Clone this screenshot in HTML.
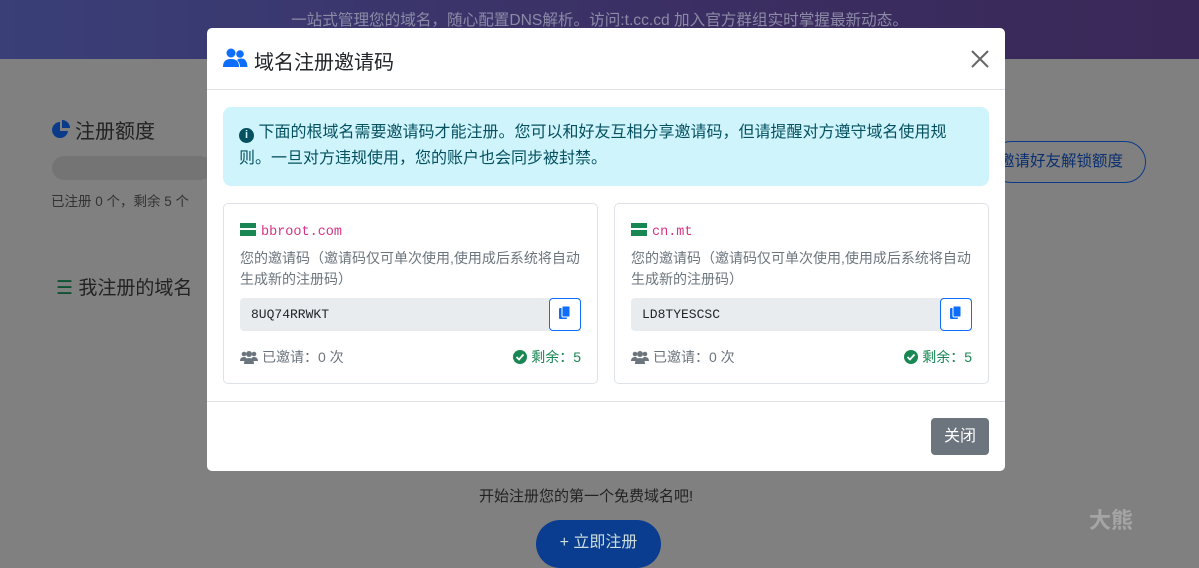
<!DOCTYPE html>
<html><head><meta charset="utf-8"><style>
*{box-sizing:border-box;margin:0;padding:0}
body{width:1199px;height:560px;overflow:hidden;position:relative;background:#808080;font-family:"Liberation Sans","Noto Sans CJK SC",sans-serif;color:#212529}
.top{position:absolute;left:0;top:0;width:1199px;height:59px;background:linear-gradient(90deg,#3a3f78,#3b2e62 60%,#3a2858)}
.top p{position:absolute;top:8px;left:0;width:1199px;text-align:center;color:#8c8aa6;font-size:15.6px}
.bg{position:absolute;font-size:15px;color:#222}
.modal{position:absolute;left:207px;top:28px;width:798px;height:443px;background:#fff;border-radius:5px}
.hd{height:62px;border-bottom:1px solid #dee2e6;position:relative}
.hd h5{position:absolute;left:47px;top:18px;font-size:20px;font-weight:normal}
.close{position:absolute;right:16px;top:22px}
.alert{position:absolute;left:16px;top:79px;width:766px;height:79px;background:#cff4fc;border-radius:8px;color:#055160;font-size:16px;line-height:26px;padding:13px 16px}
.card{position:absolute;top:175px;width:375px;height:181px;border:1px solid #dee2e6;border-radius:5px;padding:0 16px}
.dom{position:absolute;left:16px;top:19px;font-family:"Liberation Mono",monospace;color:#d63384;font-size:13.5px}
.dom i{display:inline-block;width:16px;height:13px;vertical-align:-1px;margin-right:5px;background:linear-gradient(#198754 0 5px,#fff 5px 7px,#198754 7px)}
.desc{position:absolute;left:16px;top:44px;width:345px;font-size:14px;color:#6c757d;line-height:21px}
.inp{position:absolute;left:16px;top:94px;width:341px;height:33px;background:#e9ecef;border-radius:4px 0 0 4px;font-family:"Liberation Mono",monospace;font-size:13px;padding:9px 11px;color:#212529}
.cp{position:absolute;left:325px;top:94px;width:32px;height:33px;border:1px solid #0d6efd;border-radius:4px;background:#fff}
.inv{position:absolute;left:16px;top:143px;font-size:14px;color:#6c757d}
.rem{position:absolute;right:16px;top:143px;font-size:14px;color:#198754}
.inv svg,.rem svg{vertical-align:-2px;margin-right:4px}
.ft{position:absolute;left:0;top:373px;width:798px;border-top:1px solid #dee2e6}
.btn{position:absolute;left:724px;top:390px;width:58px;height:37px;background:#6c757d;color:#fff;border-radius:4px;font-size:16px;text-align:center;line-height:37px}
</style></head><body>
<div class="top"><p>一站式管理您的域名，随心配置DNS解析。访问:t.cc.cd 加入官方群组实时掌握最新动态。</p></div>
<div class="bg" style="left:51px;top:115px;font-size:20px"><svg width="20" height="20" viewBox="0 0 20 20" style="vertical-align:-2px;margin-right:4px"><path d="M9 2A8 8 0 1 0 17 11H9z" fill="#0a3a8a"/><path d="M11 0A8 8 0 0 1 19 8H11z" fill="#0a3a8a"/></svg>注册额度</div>
<div style="position:absolute;left:52px;top:156px;width:160px;height:24px;background:#747474;border-radius:12px"></div>
<div class="bg" style="left:51px;top:190px;font-size:13.5px;color:#333">已注册 0 个，剩余 5 个</div>
<div class="bg" style="left:56px;top:273px;font-size:19px"><span style="color:#0f5132">☰</span> 我注册的域名</div>
<div style="position:absolute;left:990px;top:141px;width:156px;height:42px;border:1px solid #0a3a8a;border-radius:21px;color:#0a2f70;font-size:15.5px;line-height:40px;padding-left:8px">邀请好友解锁额度</div>
<div class="bg" style="left:479px;top:485px;font-size:15px">开始注册您的第一个免费域名吧!</div>
<div style="position:absolute;left:536px;top:520px;width:125px;height:48px;border-radius:24px;background:#0a3d8f;color:#cdd;font-size:16px;text-align:center;line-height:46px">+ 立即注册</div>
<div style="position:absolute;left:1089px;top:503px;color:#a5a5a5;font-size:22px;font-weight:bold">大熊</div>
<div class="modal">
<div class="hd">
<svg style="position:absolute;left:16px;top:20px" width="25" height="20" viewBox="0 0 25 20"><circle cx="8" cy="5" r="4.5" fill="#0d6efd"/><circle cx="17" cy="6" r="3.8" fill="#0d6efd"/><path d="M0 19c0-6 3-8 8-8s8 2 8 8z" fill="#0d6efd"/><path d="M14 12c1-1 2-1.5 4-1.5 4 0 6 2 6.5 8.5H17c0-3-1-5-3-7z" fill="#0d6efd"/></svg>
<h5>域名注册邀请码</h5>
<svg class="close" width="18" height="18" viewBox="0 0 18 18"><path d="M1 1L17 17M17 1L1 17" stroke="#666" stroke-width="2"/></svg>
</div>
<div class="alert"><span style="display:inline-block;width:15px;height:15px;border-radius:50%;background:#055160;color:#cff4fc;font-size:11px;line-height:15px;text-align:center;font-weight:bold;vertical-align:-1px">i</span> 下面的根域名需要邀请码才能注册。您可以和好友互相分享邀请码，但请提醒对方遵守域名使用规则。一旦对方违规使用，您的账户也会同步被封禁。</div>
<div class="card" style="left:16px"><div class="dom"><i></i>bbroot.com</div><div class="desc">您的邀请码（邀请码仅可单次使用,使用成后系统将自动生成新的注册码）</div><div class="inp">8UQ74RRWKT</div><div class="cp"><svg width="30" height="31" viewBox="0 0 30 31"><rect x="9" y="9" width="8" height="11" rx="1" fill="#0d6efd"/><rect x="12" y="7" width="8" height="11" rx="1" fill="#0d6efd" stroke="#fff" stroke-width="1"/></svg></div><div class="inv"><svg width="18" height="14" viewBox="0 0 18 14"><circle cx="4" cy="4" r="2.3" fill="#6c757d"/><circle cx="14" cy="4" r="2.3" fill="#6c757d"/><circle cx="9" cy="4" r="3" fill="#6c757d"/><path d="M0 11c0-3 2-4 4-4s3 1 3 4zM11 11c0-3 1-4 3-4s4 1 4 4zM4 14c0-4 2-6 5-6s5 2 5 6z" fill="#6c757d"/></svg>已邀请：0 次</div><div class="rem"><svg width="14" height="14" viewBox="0 0 14 14"><circle cx="7" cy="7" r="7" fill="#198754"/><path d="M3.5 7l2.5 2.5 4.5-5" stroke="#fff" stroke-width="1.8" fill="none"/></svg>剩余：5</div></div>
<div class="card" style="left:407px"><div class="dom"><i></i>cn.mt</div><div class="desc">您的邀请码（邀请码仅可单次使用,使用成后系统将自动生成新的注册码）</div><div class="inp">LD8TYESCSC</div><div class="cp"><svg width="30" height="31" viewBox="0 0 30 31"><rect x="9" y="9" width="8" height="11" rx="1" fill="#0d6efd"/><rect x="12" y="7" width="8" height="11" rx="1" fill="#0d6efd" stroke="#fff" stroke-width="1"/></svg></div><div class="inv"><svg width="18" height="14" viewBox="0 0 18 14"><circle cx="4" cy="4" r="2.3" fill="#6c757d"/><circle cx="14" cy="4" r="2.3" fill="#6c757d"/><circle cx="9" cy="4" r="3" fill="#6c757d"/><path d="M0 11c0-3 2-4 4-4s3 1 3 4zM11 11c0-3 1-4 3-4s4 1 4 4zM4 14c0-4 2-6 5-6s5 2 5 6z" fill="#6c757d"/></svg>已邀请：0 次</div><div class="rem"><svg width="14" height="14" viewBox="0 0 14 14"><circle cx="7" cy="7" r="7" fill="#198754"/><path d="M3.5 7l2.5 2.5 4.5-5" stroke="#fff" stroke-width="1.8" fill="none"/></svg>剩余：5</div></div>
<div class="ft"></div>
<div class="btn">关闭</div>
</div>
</body></html>
